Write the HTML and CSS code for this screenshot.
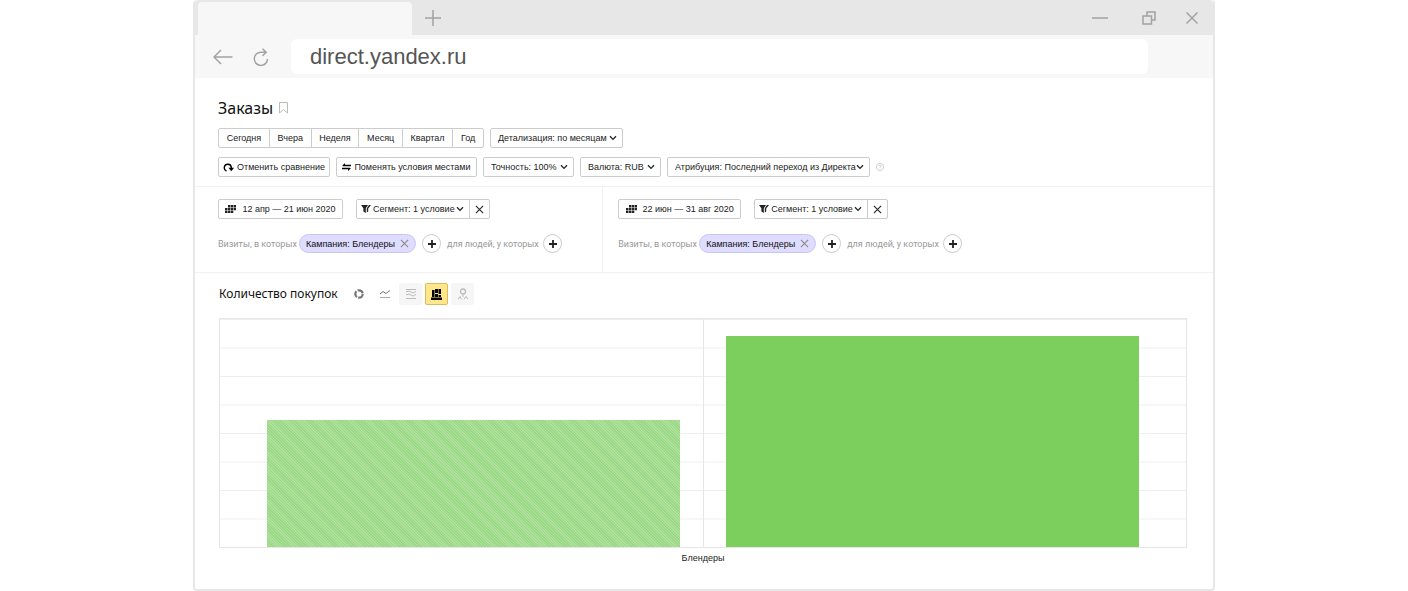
FILE: index.html
```html
<!DOCTYPE html>
<html lang="ru">
  <head>
    <title>Заказы</title>
    <meta charset="UTF-8">
    <link rel="stylesheet" href="styles.css">
  </head>
  <body>
    <!-- Shared icons -->
    <svg class="sprite" aria-hidden="true">
      <symbol id="chevron" viewBox="0 0 8 6"><path d="M1 1.2 4 4.4 7 1.2" fill="none" stroke="currentColor" stroke-width="1.3"/></symbol>
      <symbol id="cross" viewBox="0 0 10 10"><path d="M1 1 9 9M9 1 1 9" fill="none" stroke="currentColor" stroke-width="1.2"/></symbol>
      <symbol id="plus" viewBox="0 0 8 8"><path d="M4 0V8M0 4H8" fill="none" stroke="currentColor" stroke-width="1.8"/></symbol>
      <symbol id="funnel" viewBox="0 0 10 8"><path d="M0 0H7L4.8 3.2V8L2.4 6.5V3.2ZM8 0H10L7.2 3.6V6.6L5.8 7.6V3.2Z" fill="currentColor"/></symbol>
      <symbol id="calendar" viewBox="0 0 11 8"><path d="M3 0H5.500V2.400H3ZM6 0H8.300V2.400H6ZM8.800 0H11V2.400H8.800ZM0 2.900H2.500V5.200H0ZM3 2.900H5.500V5.200H3ZM6 2.900H8.300V5.200H6ZM8.800 2.900H11V5.200H8.800ZM0 5.700H2.500V8H0ZM3 5.700H5.500V8H3ZM6 5.700H8.300V8H6Z" fill="currentColor"/></symbol>
    </svg>

    <div class="window">
      <header>
        <div class="tabs">
          <div class="tab"></div>
          <button class="bare new-tab" aria-label="Новая вкладка">
            <svg width="16" height="16" viewBox="0 0 16 16"><path d="M8 0V16M0 8H16" fill="none" stroke="#a3a3a3" stroke-width="1.5"/></svg>
          </button>
          <div class="window-buttons">
            <button class="bare" aria-label="Свернуть">
              <svg width="16" height="16" viewBox="0 0 16 16"><path d="M0 8H16" fill="none" stroke="#a3a3a3" stroke-width="1.5"/></svg>
            </button>
            <button class="bare" aria-label="Развернуть">
              <svg width="14" height="14" viewBox="0 0 14 14"><path d="M1 5H9.500V13H1ZM5 5V1H13V9H9.500" fill="none" stroke="#a3a3a3" stroke-width="1.5"/></svg>
            </button>
            <button class="bare" aria-label="Закрыть">
              <svg width="12" height="12" viewBox="0 0 12 12"><path d="M.5.5 11.500 11.500M11.500.5.5 11.500" fill="none" stroke="#a3a3a3" stroke-width="1.5"/></svg>
            </button>
          </div>
        </div>
        <div class="toolbar">
          <button class="bare" aria-label="Назад">
            <svg width="20" height="16" viewBox="0 0 20 16"><path d="M1 8H19.500M8 1 1 8 8 15" fill="none" stroke="#a3a3a3" stroke-width="1.5"/></svg>
          </button>
          <button class="bare" aria-label="Обновить">
            <svg width="16" height="18" viewBox="0 0 16 18"><path d="M14.500 11A6.600 6.600 0 1 1 8 4.200H13M9.500.7 13.200 4.200 9.500 7.800" fill="none" stroke="#a3a3a3" stroke-width="1.5"/></svg>
          </button>
          <input class="address" type="text" value="direct.yandex.ru" aria-label="Адрес">
        </div>
      </header>

      <main>
        <section class="filters">
          <h1>Заказы
            <svg width="9" height="12" viewBox="0 0 9 12"><path d="M.5.5H8.500V11L4.500 7.500.5 11Z" fill="none" stroke="#bbb"/></svg>
          </h1>
          <div class="row">
            <div class="periods">
              <button>Сегодня</button>
              <button>Вчера</button>
              <button>Неделя</button>
              <button>Месяц</button>
              <button>Квартал</button>
              <button>Год</button>
            </div>
            <div class="select detail">
              <select aria-label="Детализация"><option>Детализация: по месяцам</option></select>
              <svg><use href="#chevron"/></svg>
            </div>
          </div>
          <div class="row">
            <button class="btn cancel">
              <svg width="11" height="9" viewBox="0 0 11 9"><path d="M3.500 8A3.500 3.500 0 1 1 8.300 4.500V6" fill="none" stroke="#000" stroke-width="1.400"/><path d="M5.500 4.800H11L8.300 8.300Z"/></svg>
              Отменить сравнение
            </button>
            <button class="btn swap">
              <svg width="9" height="8" viewBox="0 0 9 8"><path d="M1 2.500H9M0 5.500H8" fill="none" stroke="#000" stroke-width="1.300"/><path d="M3 0V3.100H0ZM6 8V4.900H9Z"/></svg>
              Поменять условия местами
            </button>
            <div class="select accuracy">
              <select aria-label="Точность"><option>Точность: 100%</option></select>
              <svg><use href="#chevron"/></svg>
            </div>
            <div class="select currency">
              <select aria-label="Валюта"><option>Валюта: RUB</option></select>
              <svg><use href="#chevron"/></svg>
            </div>
            <div class="select attribution">
              <select aria-label="Атрибуция"><option>Атрибуция: Последний переход из Директа</option></select>
              <svg><use href="#chevron"/></svg>
            </div>
            <button class="bare" aria-label="Справка">
              <svg width="8" height="8" viewBox="0 0 8 8"><path d="M2.900 3.200Q3 2.200 4 2.200 5.100 2.200 5 3.200 4.900 3.700 4 4.200V4.700M4 5.300V6" fill="none" stroke="#bbb" stroke-width=".7"/><circle cx="4" cy="4" r="3.600" fill="none" stroke="#bbb" stroke-width=".7"/></svg>
            </button>
          </div>
        </section>

        <section class="compare">
          <div class="side">
            <div class="row segment-row">
              <button class="btn date"><svg width="11" height="8"><use href="#calendar"/></svg>12 апр — 21 июн 2020</button>
              <div class="segment">
                <svg class="funnel"><use href="#funnel"/></svg>
                <div class="select">
                  <select aria-label="Сегмент"><option>Сегмент: 1 условие</option></select>
                  <svg><use href="#chevron"/></svg>
                </div>
                <button class="bare remove" aria-label="Удалить сегмент"><svg width="9" height="9"><use href="#cross"/></svg></button>
              </div>
            </div>
            <div class="row">
              <span class="hint">Визиты, в которых</span>
              <span class="tag">Кампания: Блендеры
                <button class="bare" aria-label="Убрать"><svg width="9" height="9"><use href="#cross"/></svg></button>
              </span>
              <button class="add" aria-label="Добавить условие"><svg width="8" height="8"><use href="#plus"/></svg></button>
              <span class="hint people">для людей, у которых</span>
              <button class="add" aria-label="Добавить людей"><svg width="8" height="8"><use href="#plus"/></svg></button>
            </div>
          </div>
          <div class="side">
            <div class="row segment-row">
              <button class="btn date"><svg width="11" height="8"><use href="#calendar"/></svg>22 июн — 31 авг 2020</button>
              <div class="segment">
                <svg class="funnel"><use href="#funnel"/></svg>
                <div class="select">
                  <select aria-label="Сегмент"><option>Сегмент: 1 условие</option></select>
                  <svg><use href="#chevron"/></svg>
                </div>
                <button class="bare remove" aria-label="Удалить сегмент"><svg width="9" height="9"><use href="#cross"/></svg></button>
              </div>
            </div>
            <div class="row">
              <span class="hint">Визиты, в которых</span>
              <span class="tag">Кампания: Блендеры
                <button class="bare" aria-label="Убрать"><svg width="9" height="9"><use href="#cross"/></svg></button>
              </span>
              <button class="add" aria-label="Добавить условие"><svg width="8" height="8"><use href="#plus"/></svg></button>
              <span class="hint people">для людей, у которых</span>
              <button class="add" aria-label="Добавить людей"><svg width="8" height="8"><use href="#plus"/></svg></button>
            </div>
          </div>
        </section>

        <section class="report">
          <div class="report-head">
            <h2>Количество покупок</h2>
            <div class="views">
              <button aria-label="Круговая диаграмма">
                <svg width="12" height="12" viewBox="0 0 12 12"><circle cx="6" cy="6" r="3.700" fill="none" stroke="#777" stroke-width="2.200" stroke-dasharray="6.500 1.250"/></svg>
              </button>
              <button aria-label="Линии">
                <svg width="12" height="10" viewBox="0 0 12 10"><path d="M1 5 4 2.500 7 4.500 11 1.500" fill="none" stroke="#777"/><path d="M1 8.500H11" stroke="#aaa"/></svg>
              </button>
              <button class="muted" aria-label="Области">
                <svg width="10" height="10" viewBox="0 0 10 10"><path d="M0 .5H10M0 3 3 2 7 4 10 2.500M0 6 3 5 7 7 10 5.500M0 9.500H10" fill="none" stroke="#bbb"/></svg>
              </button>
              <button class="active" aria-label="Столбцы">
                <svg width="11" height="11" viewBox="0 0 11 11"><path d="M1 1H3.500V8H1ZM4 0H7V4H4ZM4 5H7V8H4ZM7.500 0H10V5H7.500ZM7.500 6H10V8H7.500ZM0 8.500H11V11H0Z"/></svg>
              </button>
              <button class="muted" aria-label="Карта">
                <svg width="10" height="12" viewBox="0 0 10 12"><circle cx="5" cy="3.500" r="2.500" fill="none" stroke="#bbb" stroke-width="1.300"/><path d="M5 6V9M0 11.300 2 8.500 3.500 11.300M6 11.300 8 8.500 10 11.300" fill="none" stroke="#bbb"/></svg>
              </button>
            </div>
          </div>
          <div class="chart">
            <div class="bar before" style="height: 55.5%"></div>
            <div class="bar after" style="height: 92.5%"></div>
          </div>
          <div class="category">Блендеры</div>
        </section>
      </main>
    </div>
  </body>
</html>
```
FILE: styles.css
```css
/* General styles */

* {
  box-sizing: border-box;
}

body {
  margin: 0;
  background-color: white;
  color: #222;
  font: 9px/12px "Liberation Sans", Arial, sans-serif;
}

button,
select,
input {
  font: inherit;
  color: inherit;
}

button {
  padding: 0;
  white-space: nowrap;
}

svg {
  display: block;
  flex: none;
}

.sprite {
  position: absolute;
  width: 0;
  height: 0;
}

.bare {
  border: 0;
  background: none;
}

/* Browser window */

.window {
  max-width: 1022px;
  margin: 0 auto;
  border: 2px solid #e7e7e7;
  border-top: 0;
  border-radius: 4px;
}

.tabs {
  display: flex;
  align-items: center;
  height: 35px;
  padding-left: 3px;
  background-color: #e7e7e7;
  border-radius: 4px 4px 0 0;
}

.tab {
  align-self: flex-end;
  width: 214px;
  height: 33px;
  background-color: #f7f7f7;
  border-radius: 4px 4px 0 0;
}

.new-tab {
  margin-left: 13px;
}

.window-buttons {
  display: flex;
  align-items: center;
  gap: 34px;
  margin-left: auto;
  padding-right: 15px;
}

.window-buttons button:last-child {
  margin-left: -4px;
}

.toolbar {
  display: flex;
  align-items: center;
  gap: 20px;
  height: 43px;
  padding: 0 65px 0 18px;
  background-color: #f7f7f7;
}

.address {
  flex: 1;
  height: 35px;
  margin-left: 2px;
  padding: 0 19px;
  border: 0;
  border-radius: 6px;
  background-color: white;
  color: #555;
  font-size: 22px;
}

/* Filters */

.filters {
  padding: 21px 23px 9px;
  border-bottom: 1px solid #f1f1f1;
}

h1 {
  display: flex;
  align-items: center;
  gap: 6px;
  margin: 0 0 11px;
  color: #111;
  font: 16px/18px "Noto Sans", sans-serif;
}

.row {
  display: flex;
  align-items: center;
  gap: 6px;
}

.row + .row {
  margin-top: 9px;
}

.btn,
.select,
.segment,
.periods {
  display: flex;
  align-items: center;
  height: 20px;
  border: 1px solid #ccc;
  border-radius: 2px;
  background-color: white;
}

.btn {
  justify-content: center;
  gap: 3px;
}

.periods {
  width: 266px;
}

.periods button {
  flex: auto;
  height: 100%;
  border: 0;
  border-right: 1px solid #ccc;
  background: none;
}

.periods button:last-child {
  border-right: 0;
}

.select {
  position: relative;
}

.select select {
  width: 100%;
  height: 100%;
  padding: 0 8px 0 7px;
  border: 0;
  background: none;
  appearance: none;
}

.select svg {
  position: absolute;
  right: 5px;
  width: 8px;
  height: 6px;
  pointer-events: none;
}

.cancel {
  width: 112px;
}

.swap {
  width: 141px;
}

.detail {
  width: 133px;
}

.accuracy {
  width: 91px;
}

.currency {
  width: 81px;
}

.attribution {
  width: 203px;
}

/* Compared periods */

.compare {
  display: grid;
  grid-template-columns: 2fr 3fr;
  border-bottom: 1px solid #f1f1f1;
}

.side {
  padding: 12px 0 19px 23px;
}

.side + .side {
  padding-left: 15px;
  border-left: 1px solid #f1f1f1;
}

.side .row + .row {
  margin-top: 15px;
}

.side .segment-row {
  gap: 13px;
}

.date {
  gap: 6px;
  width: 125px;
}

.side + .side .date {
  width: 123px;
}

.segment {
  width: 134px;
  padding-left: 4px;
}

.funnel {
  width: 10px;
  height: 8px;
}

.segment .select {
  flex: 1;
  height: 100%;
  border: 0;
}

.segment .select select {
  padding-left: 2px;
}

.remove {
  display: flex;
  align-items: center;
  justify-content: center;
  width: 20px;
  height: 100%;
  border-left: 1px solid #ccc;
}

.hint {
  width: 75px;
  color: #999;
  font-family: Roboto, sans-serif;
  white-space: nowrap;
}

.people {
  width: 90px;
}

.tag {
  display: flex;
  align-items: center;
  justify-content: space-between;
  width: 117px;
  height: 19px;
  padding: 0 6px;
  border: 1px solid #c9c6f3;
  border-radius: 10px;
  background-color: #dedcff;
  color: #111;
  white-space: nowrap;
}

.tag button {
  color: #888;
}

.add {
  display: flex;
  align-items: center;
  justify-content: center;
  width: 19px;
  height: 19px;
  border: 1px solid #ccc;
  border-radius: 50%;
  background-color: white;
}

/* Report */

.report {
  padding: 10px 26px 25px 24px;
}

.report-head {
  display: flex;
  align-items: center;
  gap: 11px;
}

h2 {
  width: 117px;
  margin: 0;
  color: #111;
  font: 12px/16px "Noto Sans", sans-serif;
  white-space: nowrap;
}

.views {
  display: flex;
  gap: 3px;
}

.views button {
  display: flex;
  align-items: center;
  justify-content: center;
  width: 23px;
  height: 22px;
  border: 0;
  border-radius: 2px;
  background: none;
}

.views .muted {
  background-color: #f6f6f6;
}

.views .active {
  border: 1px solid #d9bd5c;
  background-color: #ffe68c;
}

.chart {
  display: flex;
  align-items: flex-end;
  gap: 46px;
  height: 230px;
  margin-top: 13px;
  padding: 0 47px;
  border: 1px solid #e6e6e6;
  background:
    linear-gradient(#e6e6e6, #e6e6e6) center / 1px 100% no-repeat,
    linear-gradient(#eee, #eee 1px, transparent 1px) 0 0 / 100% 12.5%;
}

.bar {
  flex: 1;
}

.before {
  background: repeating-linear-gradient(45deg, #9ad984 0 1px, #b0e09e 1px 2px);
}

.after {
  background-color: #7dcf5d;
}

.category {
  margin-top: 4px;
  text-align: center;
}
```
